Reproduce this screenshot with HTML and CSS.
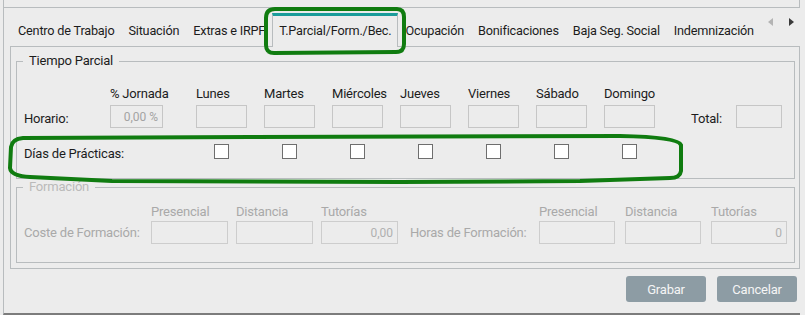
FILE: index.html
```html
<!DOCTYPE html>
<html lang="es">
	<head>
		<meta charset="UTF-8" />
		<meta name="viewport" content="width=device-width, initial-scale=1.0" />
		<title>Contrato - T.Parcial/Form./Bec.</title>
		<link rel="stylesheet" href="styles.css">
	</head>
	<body>
		<div class="window">
			<div class="top-box"></div>

			<div class="tab-bar">
				<div class="tab">Centro de Trabajo</div>
				<div class="tab">Situación</div>
				<div class="tab">Extras e IRPF</div>
				<div class="tab active">T.Parcial/Form./Bec.</div>
				<div class="tab">Ocupación</div>
				<div class="tab">Bonificaciones</div>
				<div class="tab">Baja Seg. Social</div>
				<div class="tab">Indemnización</div>
				<div class="tab-arrows">
					<svg width="6" height="8" viewBox="0 0 6 8"><polygon points="5,0 5,8 0,4" fill="#b4b4b4" /></svg>
					<svg width="6" height="8" viewBox="0 0 6 8"><polygon points="0,0 0,8 5,4" fill="#3a3a3a" /></svg>
				</div>
			</div>

			<div class="tab-panel">
				<fieldset class="frame">
					<legend>Tiempo Parcial</legend>

					<div class="sched-row head-row">
						<span></span>
						<span class="col-head pct-head">% Jornada</span>
						<span class="col-head">Lunes</span>
						<span class="col-head">Martes</span>
						<span class="col-head">Miércoles</span>
						<span class="col-head">Jueves</span>
						<span class="col-head">Viernes</span>
						<span class="col-head">Sábado</span>
						<span class="col-head">Domingo</span>
						<span></span>
					</div>

					<div class="sched-row input-row">
						<label class="row-label">Horario:</label>
						<input class="box pct-box" type="text" value="0,00 %" disabled />
						<input class="box day-box" type="text" />
						<input class="box day-box" type="text" />
						<input class="box day-box" type="text" />
						<input class="box day-box" type="text" />
						<input class="box day-box" type="text" />
						<input class="box day-box" type="text" />
						<input class="box day-box" type="text" />
						<div class="total">
							<label class="row-label">Total:</label>
							<input class="box total-box" type="text" />
						</div>
					</div>

					<div class="sched-row check-row">
						<label class="row-label practice-label">Días de Prácticas:</label>
						<span class="check-cell"><span class="check"></span></span>
						<span class="check-cell"><span class="check"></span></span>
						<span class="check-cell"><span class="check"></span></span>
						<span class="check-cell"><span class="check"></span></span>
						<span class="check-cell"><span class="check"></span></span>
						<span class="check-cell"><span class="check"></span></span>
						<span class="check-cell"><span class="check"></span></span>
					</div>
				</fieldset>

				<fieldset class="frame disabled">
					<legend>Formación</legend>

					<div class="training-row">
						<label class="training-label">Coste de Formación:</label>
						<div class="field-group cost-fields">
							<div class="field">
								<span class="col-head">Presencial</span>
								<input class="box cost-box" type="text" disabled />
							</div>
							<div class="field">
								<span class="col-head">Distancia</span>
								<input class="box cost-box" type="text" disabled />
							</div>
							<div class="field">
								<span class="col-head">Tutorías</span>
								<input class="box cost-box" type="text" value="0,00" disabled />
							</div>
						</div>

						<label class="training-label hours-label">Horas de Formación:</label>
						<div class="field-group hours-fields">
							<div class="field">
								<span class="col-head">Presencial</span>
								<input class="box hours-box" type="text" disabled />
							</div>
							<div class="field">
								<span class="col-head">Distancia</span>
								<input class="box hours-box" type="text" disabled />
							</div>
							<div class="field">
								<span class="col-head">Tutorías</span>
								<input class="box hours-box" type="text" value="0" disabled />
							</div>
						</div>
					</div>
				</fieldset>
			</div>

			<div class="actions">
				<button type="button" class="btn">Grabar</button>
				<button type="button" class="btn">Cancelar</button>
			</div>
		</div>

		<!-- marcas a mano sobre la captura -->
		<svg class="marks" width="805" height="315" viewBox="0 0 805 315">
			<path d="M275 9 L397 9 Q404 9 404 17 L404 44 Q404 52 396 52 L274 53 Q266 53 266 45 L266 18 Q266 9 275 9 Z" />
			<path d="M11 147 Q12 139 23 138 L250 137 L620 136 Q678 137 681 145 L681 171 Q680 178 670 178 L580 181 L400 182 L112 181 L30 177 Q11 176 10 168 Z" />
		</svg>
	</body>
</html>
```

FILE: styles.css
```css
/* base */
body {
	margin: 0;
	background-color: #ececec;
	font-family: 'Roboto', 'Noto Sans', sans-serif;
	font-size: 13px;
	letter-spacing: -0.2px;
	color: #1c1c1c;
}

.window {
	margin-left: 3px;
	width: 797px;
	height: 315px;
	border-left: 1px solid #b8bcbe;
	border-bottom: 2px solid #7c7c7c;
	box-sizing: border-box;
	padding: 0 0 11px 6px;
	position: relative;
}

.top-box {
	height: 7px;
	margin-left: -6px;
	border-right: 1px solid #b8bcbe;
	border-bottom: 1px solid #b8bcbe;
}

/* pestañas */
.tab-bar {
	display: flex;
	align-items: flex-end;
	height: 38px;
	padding-left: 1px;
	width: 790px;
	box-sizing: border-box;
	font-size: 12.7px;
}

.tab {
	height: 30px;
	line-height: 30px;
	padding: 0 7px;
	border-top: 3px solid transparent;
	white-space: nowrap;
}

.tab.active {
	border-top-color: #1a9c9a;
	border-left: 1px solid #b8bcbe;
	border-right: 1px solid #b8bcbe;
	padding: 0 6px;
	margin-bottom: -1px;
	height: 31px;
	background-color: #ececec;
	position: relative;
}

.tab-arrows {
	margin-left: auto;
	align-self: flex-start;
	margin-top: 10px;
	margin-right: 5px;
	display: flex;
	gap: 15px;
}

.tab-panel {
	width: 790px;
	box-sizing: border-box;
	border: 1px solid #b8bcbe;
	padding: 0 4px 5px 5px;
}

/* marcos */
.frame {
	margin: 6px 0 0 0;
	padding: 0 12px 21px 7px;
	border: 1px solid #b8bcbe;
	min-width: 0;
}

.frame legend {
	margin-left: -1px;
	padding: 0 6px;
	line-height: 16px;
}

.frame.disabled {
	margin-top: 0;
	padding: 0 4px 18px 7px;
	color: #a9a9a9;
}

.frame.disabled legend {
	color: #bababa;
}

.sched-row {
	display: grid;
	grid-template-columns: 86px 86px repeat(7, 68px) 1fr;
	align-items: center;
}

.head-row {
	margin-top: 16px;
	height: 18px;
	line-height: 18px;
}

.input-row {
	margin-top: 2px;
	height: 23px;
}

.check-row {
	margin-top: 14px;
	height: 15px;
}

.col-head {
	white-space: nowrap;
}

.pct-head {
	width: 53px;
	text-align: center;
}

.row-label {
	padding-top: 3px;
}

.practice-label {
	grid-column: span 2;
	padding-top: 4px;
}

.box {
	height: 23px;
	box-sizing: border-box;
	border: 1px solid #c6c6c6;
	background-color: #ececec;
	font-family: 'Roboto', 'Noto Sans', sans-serif;
	font-size: 12px;
	color: #a3a3a3;
	text-align: right;
	padding: 0 4px;
	margin: 0;
}

.pct-box {
	width: 53px;
}

.day-box {
	width: 51px;
}

.total {
	display: flex;
	justify-content: flex-end;
	align-items: center;
}

.total-box {
	width: 46px;
	margin-left: 14px;
}

.check-cell {
	display: flex;
}

.check {
	width: 15px;
	height: 15px;
	box-sizing: border-box;
	margin-left: 18px;
	border: 1px solid #6e6e6e;
	background-color: #ffffff;
}

/* formación */
.training-row {
	display: flex;
	margin-top: 9px;
	align-items: flex-end;
}

.training-label {
	flex: 0 0 127px;
	line-height: 23px;
	white-space: nowrap;
}

.hours-label {
	flex-basis: 129px;
	margin-left: 12px;
}

.field-group {
	display: flex;
	flex-shrink: 0;
}

.cost-fields {
	gap: 8px;
}

.hours-fields {
	gap: 10px;
}

.field {
	display: flex;
	flex-direction: column;
}

.field .col-head {
	line-height: 16px;
	margin-bottom: 1px;
}

.cost-box {
	width: 77px;
	border-color: #cdcdcd;
	color: #b0b0b0;
}

.hours-box {
	width: 76px;
	border-color: #cdcdcd;
	color: #b0b0b0;
}

/* botones */
.actions {
	display: flex;
	justify-content: flex-end;
	gap: 11px;
	margin-top: 7px;
	width: 787px;
}

.btn {
	width: 80px;
	height: 26px;
	border: none;
	border-radius: 3px;
	background-color: #8d9ca4;
	color: #f5f5f5;
	font-family: 'Roboto', 'Noto Sans', sans-serif;
	font-size: 13px;
	letter-spacing: -0.2px;
	padding: 0;
}

.marks {
	position: absolute;
	top: 0;
	left: 0;
	pointer-events: none;
}

.marks path {
	fill: none;
	stroke: #107c10;
	stroke-width: 4;
	stroke-linejoin: round;
}
```
